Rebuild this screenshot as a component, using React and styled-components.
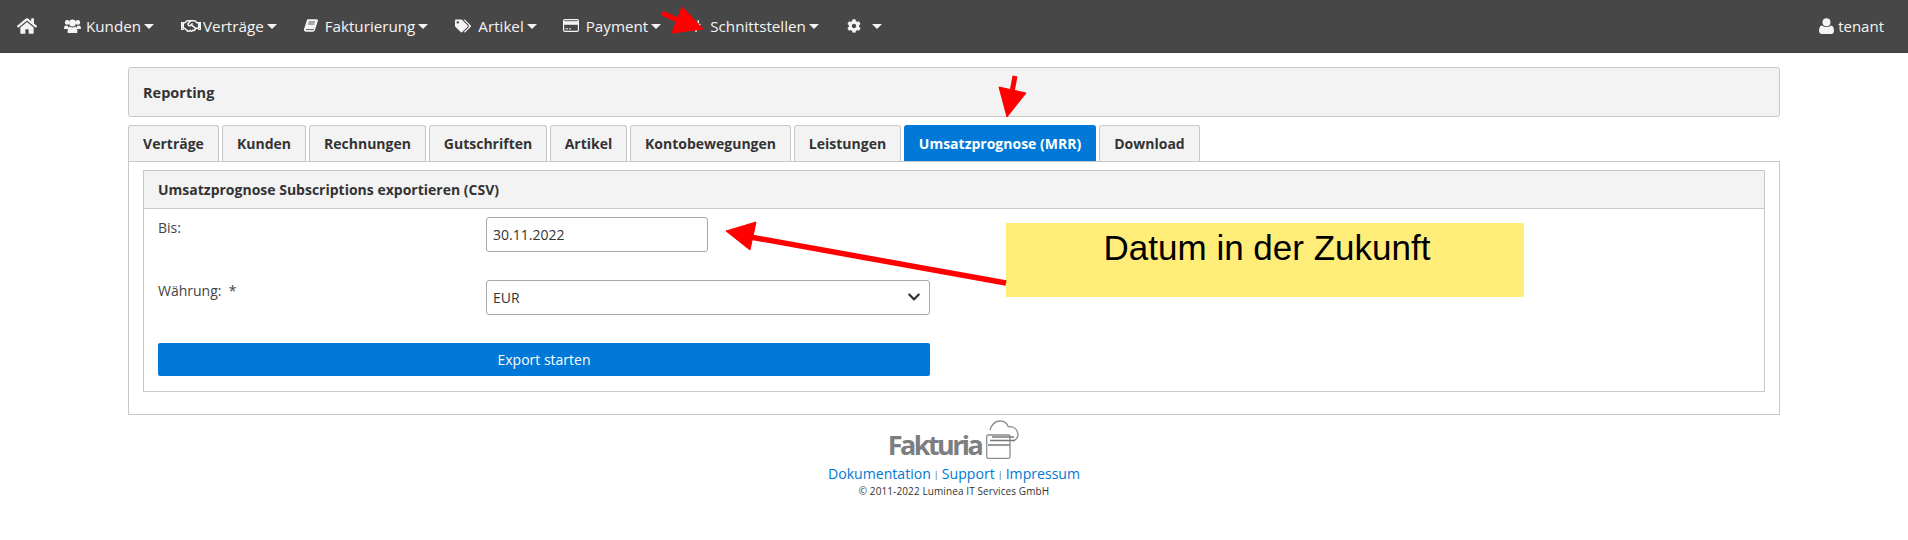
import styled, { createGlobalStyle } from 'styled-components';
import { FaHome, FaRegHandshake, FaTags, FaPlug, FaCog, FaChevronDown } from 'react-icons/fa';

const BLUE = '#0078d7';

const GlobalStyle = createGlobalStyle`
  html, body {
    margin: 0;
    background: #fff;
    font-family: "Open Sans", "Liberation Sans", sans-serif;
    font-size: 14px;
    color: #333;
  }
`;

const Page = styled.div`
  position: relative;
  width: 1908px;
  height: 540px;
  overflow: hidden;
`;

const NavBar = styled.nav`
  height: 52px;
  background: #474747;
  border-bottom: 1px solid #3c3c3c;
  display: flex;
  align-items: center;
  justify-content: space-between;
  padding: 0 24px 0 17px;
  color: #fff;
`;

const NavList = styled.div`
  display: flex;
  align-items: center;
`;

const NavItem = styled.a`
  display: flex;
  align-items: center;
  font-size: 15.2px;
  color: #f4f4f4;
  margin-right: ${(p) => p.$gap}px;

  svg { flex: none; }
`;

const NavLabel = styled.span`
  margin-left: ${(p) => p.$offset}px;
`;

const Caret = styled.span`
  width: 0;
  height: 0;
  margin-left: ${(p) => p.$offset || 3}px;
  border-left: 5px solid transparent;
  border-right: 5px solid transparent;
  border-top: 5px solid #f4f4f4;
`;

const UserBox = styled.div`
  display: flex;
  align-items: center;
  gap: 4px;
  font-size: 15px;
  color: #f4f4f4;
`;

const Container = styled.main`
  margin: 14px 128px 0;
`;

const TitlePanel = styled.header`
  height: 48px;
  display: flex;
  align-items: center;
  padding: 0 14px;
  background: #f3f3f3;
  border: 1px solid #c8c8c8;
  border-radius: 3px;
  font-weight: 700;
  font-size: 14.5px;
`;

const Tabs = styled.div`
  display: flex;
  gap: 3px;
  margin-top: 8px;
`;

const Tab = styled.a`
  height: 36px;
  display: flex;
  align-items: center;
  justify-content: center;
  box-sizing: border-box;
  width: ${(p) => p.$width}px;
  font-size: 14px;
  font-weight: 700;
  color: ${(p) => (p.$active ? '#fff' : '#333')};
  background: ${(p) => (p.$active ? BLUE : '#f3f3f3')};
  border: 1px solid ${(p) => (p.$active ? BLUE : '#c8c8c8')};
  border-bottom: none;
  border-radius: 3px 3px 0 0;
`;

const TabBody = styled.section`
  height: 254px;
  box-sizing: border-box;
  padding: 8px 14px 0;
  border: 1px solid #c8c8c8;
`;

const FormPanel = styled.div`
  height: 222px;
  box-sizing: border-box;
  border: 1px solid #c8c8c8;
`;

const FormHeader = styled.div`
  height: 37px;
  display: flex;
  align-items: center;
  padding: 0 14px;
  background: #f3f3f3;
  border-bottom: 1px solid #c8c8c8;
  font-weight: 700;
  font-size: 14px;
`;

const Form = styled.form`
  display: grid;
  grid-template-columns: 328px 444px;
  grid-auto-rows: 35px;
  row-gap: 28px;
  padding: 8px 14px 0;
`;

const Label = styled.label`
  padding-top: 1px;
  font-size: 14px;
  line-height: 20px;
  color: #444;
`;

const TextInput = styled.input`
  width: 222px;
  height: 35px;
  box-sizing: border-box;
  padding: 0 6px;
  border: 1px solid #a8a8a8;
  border-radius: 3px;
  font: 14px "Open Sans", sans-serif;
  color: #333;
  background: #fff;
`;

const SelectWrap = styled.div`
  position: relative;
  height: 35px;
`;

const Select = styled.select`
  appearance: none;
  width: 100%;
  height: 35px;
  box-sizing: border-box;
  padding: 0 6px;
  border: 1px solid #a8a8a8;
  border-radius: 3px;
  font: 14px "Open Sans", sans-serif;
  color: #333;
  background: #fff;
`;

const SelectArrow = styled.span`
  position: absolute;
  top: 10px;
  right: 9px;
  display: flex;
  color: #333;
  pointer-events: none;
`;

const SubmitButton = styled.button`
  grid-column: 1 / -1;
  height: 33px;
  border: none;
  border-radius: 2px;
  background: ${BLUE};
  color: #fff;
  font: 14px "Open Sans", sans-serif;
`;

const Footer = styled.footer`
  margin-top: 4px;
  display: flex;
  flex-direction: column;
  align-items: center;
`;

const Logo = styled.div`
  height: 41px;
  display: flex;
  align-items: flex-end;
  gap: 4px;
`;

const LogoText = styled.span`
  font-size: 27px;
  line-height: 30px;
  font-weight: 700;
  letter-spacing: -2.6px;
  color: #7c7e80;
`;

const FooterLinks = styled.div`
  display: flex;
  align-items: center;
  height: 22px;
  margin-top: 2px;
  font-size: 14.1px;
`;

const FooterLink = styled.a`
  color: ${BLUE};
`;

const Sep = styled.span`
  font-size: 9px;
  color: #555;
  margin: 3px 3px 0;
`;

const Copyright = styled.div`
  font-size: 10px;
  letter-spacing: 0.1px;
  line-height: 14px;
  color: #333;
`;

const Callout = styled.div`
  position: absolute;
  left: 1006px;
  top: 223px;
  width: 518px;
  height: 74px;
  padding-left: 4px;
  box-sizing: border-box;
  background: #ffed7a;
  color: #000;
  font: 35px/50px "Liberation Sans", Arial, sans-serif;
  text-align: center;
`;

const Annotations = styled.svg`
  position: absolute;
  left: 0;
  top: 0;
  pointer-events: none;
`;

const UsersIcon = ({ size }) => (
  <svg width={size} height={size * 0.88} viewBox="0 0 17 15" fill="currentColor">
    <circle cx="3.2" cy="3.4" r="2.4" />
    <circle cx="13.8" cy="3.4" r="2.4" />
    <circle cx="8.5" cy="4" r="3.4" />
    <path d="M0 10 Q0 6.5 2 6.5 L4 7 Q4.2 9 4.8 10 H0 Z" />
    <path d="M17 10 Q17 6.5 15 6.5 L13 7 Q12.8 9 12.2 10 H17 Z" />
    <path d="M3.6 12.8 Q3.6 8 5.6 7.6 Q8.5 9.4 11.4 7.6 Q13.4 8 13.4 12.8 Q13.4 15 11.4 15 H5.6 Q3.6 15 3.6 12.8 Z" />
  </svg>
);

const BookIcon = ({ size }) => (
  <svg width={size} height={size * 0.93} viewBox="0 0 14 13" fill="currentColor">
    <path d="M3.6 0.2 H13 Q14.2 0.6 13.8 2 L11.2 10.6 Q10.8 12.4 9 12.8 H2 Q-0.2 12.6 0 10.2 Q0 9.6 0.4 9 L3 1 Q3.2 0.4 3.6 0.2 Z" />
    <path d="M2 10.6 H10 M4.6 3 H11 M4 5 H10.4" stroke="#474747" strokeWidth="0.9" fill="none" />
  </svg>
);

const CardIcon = ({ size }) => (
  <svg width={size} height={size * 0.82} viewBox="0 0 16 13" fill="none" stroke="currentColor">
    <rect x="0.6" y="0.6" width="14.8" height="11.8" rx="1.2" strokeWidth="1.2" />
    <rect x="0.6" y="2.4" width="14.8" height="3" fill="currentColor" strokeWidth="0.6" />
    <path d="M2.4 9.8 H5 M6 9.8 H8" strokeWidth="1" />
  </svg>
);

const UserIcon = ({ size }) => (
  <svg width={size} height={size * 1.07} viewBox="0 0 15 16" fill="currentColor">
    <circle cx="7.5" cy="4.2" r="4" />
    <path d="M0 13 Q0 8 2.8 7.4 Q7.5 10.4 12.2 7.4 Q15 8 15 13 Q15 16 12.4 16 H2.6 Q0 16 0 13 Z" />
  </svg>
);

const NAV = [
  { label: 'Kunden', Icon: UsersIcon, size: 17, offset: 5, gap: 27 },
  { label: 'Verträge', Icon: FaRegHandshake, size: 20, offset: 2, gap: 27 },
  { label: 'Fakturierung', Icon: BookIcon, size: 14, offset: 7, gap: 27 },
  { label: 'Artikel', Icon: FaTags, size: 16, offset: 7, gap: 26 },
  { label: 'Payment', Icon: CardIcon, size: 16, offset: 7, gap: 29 },
  { label: 'Schnittstellen', Icon: FaPlug, size: 12, offset: 8, gap: 28 },
];

const TABS = [
  ['Verträge', 91], ['Kunden', 84], ['Rechnungen', 117], ['Gutschriften', 118], ['Artikel', 77],
  ['Kontobewegungen', 161], ['Leistungen', 107], ['Umsatzprognose (MRR)', 192], ['Download', 101],
];

export default function App() {
  return (
    <Page>
      <GlobalStyle />
      <NavBar>
        <NavList>
          <NavItem $gap={27}><FaHome size={20} /></NavItem>
          {NAV.map(({ label, Icon, size, offset, gap }) => (
            <NavItem key={label} $gap={gap}>
              <Icon size={size} />
              <NavLabel $offset={offset}>{label}</NavLabel>
              <Caret />
            </NavItem>
          ))}
          <NavItem $gap={0}>
            <FaCog size={14} />
            <Caret $offset={11} />
          </NavItem>
        </NavList>
        <UserBox><UserIcon size={15} />tenant</UserBox>
      </NavBar>

      <Container>
        <TitlePanel>Reporting</TitlePanel>
        <Tabs>
          {TABS.map(([label, width]) => (
            <Tab key={label} $width={width} $active={label.startsWith('Umsatz')}>{label}</Tab>
          ))}
        </Tabs>
        <TabBody>
          <FormPanel>
            <FormHeader>Umsatzprognose Subscriptions exportieren (CSV)</FormHeader>
            <Form>
              <Label>Bis:</Label>
              <div><TextInput defaultValue="30.11.2022" /></div>
              <Label>Währung:&nbsp; *</Label>
              <SelectWrap>
                <Select defaultValue="EUR"><option>EUR</option></Select>
                <SelectArrow><FaChevronDown size={14} /></SelectArrow>
              </SelectWrap>
              <SubmitButton type="button">Export starten</SubmitButton>
            </Form>
          </FormPanel>
        </TabBody>

        <Footer>
          <Logo>
            <LogoText>Fakturia</LogoText>
            <svg width="35" height="40" viewBox="0 0 35 40" fill="none" stroke="#8a8c8e" strokeWidth="1.3">
              <path d="M5 10 C7 4 11 1 15 1 C19 1 22 3 23.3 6.7 C27 6 31 8 32 11 C34 15 33 19 28 21" />
              <rect x="1.7" y="15" width="23.3" height="23.3" rx="1.5" fill="#fff" />
              <path d="M7 17 H29 M5 20.5 H30 M3 25 H25" strokeWidth="1.5" stroke="#77797b" />
            </svg>
          </Logo>
          <FooterLinks>
            <FooterLink>Dokumentation</FooterLink>
            <Sep>|</Sep>
            <FooterLink>Support</FooterLink>
            <Sep>|</Sep>
            <FooterLink>Impressum</FooterLink>
          </FooterLinks>
          <Copyright>© 2011-2022 Luminea IT Services GmbH</Copyright>
        </Footer>
      </Container>

      {/* annotations painted on top of the screenshot */}
      <Callout>Datum in der Zukunft</Callout>
      <Annotations width="1908" height="540" fill="#ff0000" stroke="#ff0000">
        <path d="M662 13 L686 24" strokeWidth="5" />
        <path d="M682 7 L703 29 L672 33 Z" />
        <path d="M1015 76 L1012 92" strokeWidth="5" />
        <path d="M999 87 L1026 93 L1007 117 Z" />
        <path d="M1006 283 L745 236" strokeWidth="5.5" />
        <path d="M726 231 L756 222 L750 250 Z" />
      </Annotations>
    </Page>
  );
}
